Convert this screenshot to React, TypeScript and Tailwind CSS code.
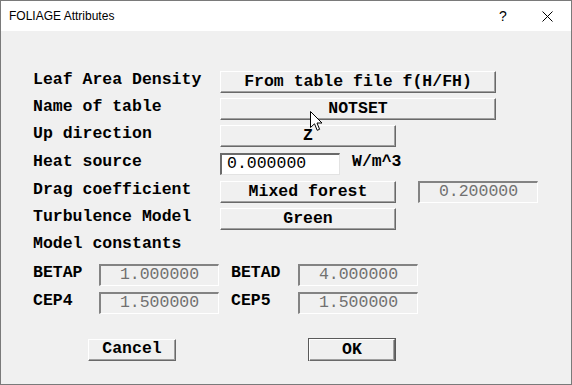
import React from "react";

const mono = "font-['Liberation_Mono',monospace]";

function RaisedButton({ label, className = "" }: { label: string; className?: string }) {
  return (
    <div
      className={`flex h-[22px] items-center justify-center border border-t-white border-l-white border-b-[#696969] border-r-[#696969] bg-[#f0f0f0] font-bold text-black shadow-[inset_-1px_-1px_0_#a0a0a0] ${className}`}
    >
      {label}
    </div>
  );
}

function ReadOnlyField({ value, className = "" }: { value: string; className?: string }) {
  return (
    <div
      className={`flex h-[22px] w-[120px] items-center justify-center border-t-2 border-l-2 border-b border-r border-t-[#838383] border-l-[#838383] border-b-white border-r-white bg-[#f0f0f0] text-[#707070] ${className}`}
    >
      {value}
    </div>
  );
}

function Row({ label, children, className = "" }: { label: string; children?: React.ReactNode; className?: string }) {
  return (
    <div className={`flex h-[22px] items-center ${className}`}>
      <div className="w-[187px] -translate-y-[2px] font-bold">{label}</div>
      {children}
    </div>
  );
}

export default function App() {
  return (
    <div className="relative flex h-[385px] w-[572px] flex-col overflow-hidden border border-[#7a7a7a] bg-[#f0f0f0]">
      {/* title bar */}
      <div className="flex h-[30px] shrink-0 items-center bg-white pl-2 font-['Liberation_Sans',sans-serif] text-[12px] text-black">
        <span className="flex-1">FOLIAGE Attributes</span>
        <span className="mr-[5px] w-[30px] text-center text-[14px]">?</span>
        <span className="flex w-[48px] items-center justify-center">
          <svg width="11" height="11" viewBox="0 0 11 11" fill="none" stroke="#000" strokeWidth="1">
            <path d="M0.5 0.5 L10.5 10.5 M10.5 0.5 L0.5 10.5" />
          </svg>
        </span>
      </div>

      {/* body */}
      <div className={`flex flex-col pl-[32px] pt-[40px] text-[16.5px] leading-none text-black ${mono}`}>
        <Row label="Leaf Area Density">
          <RaisedButton label="From table file f(H/FH)" className="w-[276px]" />
        </Row>
        <Row label="Name of table" className="mt-[5px]">
          <RaisedButton label="NOTSET" className="w-[276px]" />
        </Row>
        <Row label="Up direction" className="mt-[5px]">
          <RaisedButton label="Z" className="w-[176px]" />
        </Row>
        <Row label="Heat source" className="mt-[6px]">
          <div className="flex h-[22px] w-[120px] items-center border-t-2 border-l-2 border-b border-r border-t-[#6a6a6a] border-l-[#6a6a6a] border-b-[#e3e3e3] border-r-[#e3e3e3] bg-white pl-[5px]">
            0.000000
          </div>
          <span className="ml-[12px] -translate-y-[2px] font-bold">W/m^3</span>
        </Row>
        <Row label="Drag coefficient" className="mt-[6px]">
          <RaisedButton label="Mixed forest" className="w-[176px]" />
          <ReadOnlyField value="0.200000" className="ml-[22px]" />
        </Row>
        <Row label="Turbulence Model" className="mt-[5px]">
          <RaisedButton label="Green" className="w-[176px]" />
        </Row>
        <div className="mt-[5px] flex h-[19px] items-center font-bold">Model constants</div>

        <div className="mt-[10px] flex h-[22px] items-center">
          <span className="w-[66px] -translate-y-[2px] font-bold">BETAP</span>
          <ReadOnlyField value="1.000000" />
          <span className="ml-[12px] w-[67px] -translate-y-[2px] font-bold">BETAD</span>
          <ReadOnlyField value="4.000000" />
        </div>
        <div className="mt-[6px] flex h-[22px] items-center">
          <span className="w-[66px] -translate-y-[2px] font-bold">CEP4</span>
          <ReadOnlyField value="1.500000" />
          <span className="ml-[12px] w-[67px] -translate-y-[2px] font-bold">CEP5</span>
          <ReadOnlyField value="1.500000" />
        </div>

        <div className="mt-[24px] flex items-center pl-[55px]">
          <RaisedButton label="Cancel" className="w-[88px]" />
          <div className="ml-[132px] flex h-[23px] w-[88px] border border-[#5a5a5a]">
            <RaisedButton label="OK" className="h-[21px] w-full" />
          </div>
        </div>
      </div>

      {/* mouse cursor */}
      <svg
        className="absolute left-[309px] top-[110px]"
        width="13"
        height="21"
        viewBox="0 0 13 21"
      >
        <path
          d="M0.5 0.5 V16.5 L4.5 12.8 L7.2 19.3 L9.6 18.3 L7 12 H12 Z"
          fill="#fff"
          stroke="#000"
          strokeWidth="1"
          strokeLinejoin="miter"
        />
      </svg>
    </div>
  );
}
